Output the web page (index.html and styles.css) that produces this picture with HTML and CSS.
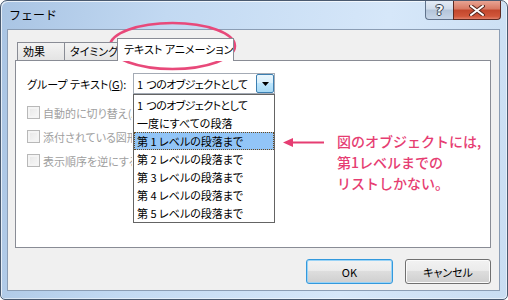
FILE: index.html
```html
<!DOCTYPE html>
<html lang="ja">
<head>
<meta charset="utf-8">
<title>フェード</title>
<link rel="stylesheet" href="styles.css">
</head>
<body>
<div class="window">
  <div class="titlebar">
    <span class="title">フェード</span>
    <div class="caption">
      <div class="cap help">?</div>
      <div class="cap close">
        <svg width="16" height="11" viewBox="0 0 16 11"><path d="M2 1 L14 10 M14 1 L2 10" stroke="#5a2a20" stroke-width="4" stroke-linecap="round"/><path d="M2 1 L14 10 M14 1 L2 10" stroke="#ffffff" stroke-width="2" stroke-linecap="round"/></svg>
      </div>
    </div>
  </div>
  <div class="client">
    <div class="tabs">
      <div class="tab">効果</div>
      <div class="tab tab-timing">タイミング</div>
      <div class="tab active">テキスト アニメーション</div>
    </div>
    <div class="panel">
      <div class="row">
        <span class="label">グループ テキスト(<u>G</u>):</span>
        <div class="combo">
          <span class="combo-value kana">1 つのオブジェクトとして</span>
          <span class="combo-btn"><svg width="7" height="4" viewBox="0 0 7 4"><path d="M0 0 H7 L3.5 4 Z" fill="#000"/></svg></span>
          <ul class="droplist">
            <li class="kana">1 つのオブジェクトとして</li>
            <li>一度にすべての段落</li>
            <li class="sel">第 1 レベルの段落まで</li>
            <li>第 2 レベルの段落まで</li>
            <li>第 3 レベルの段落まで</li>
            <li>第 4 レベルの段落まで</li>
            <li>第 5 レベルの段落まで</li>
          </ul>
        </div>
      </div>
      <div class="checks">
        <div class="check"><span class="box"></span><span class="check-label">自動的に切り替え(A)</span></div>
        <div class="check"><span class="box"></span><span class="check-label">添付されている図形を</span></div>
        <div class="check"><span class="box"></span><span class="check-label">表示順序を逆にする(R)</span></div>
      </div>
      <div class="note">
        <svg class="arrow" width="41" height="11" viewBox="0 0 41 11"><path d="M6 5.5 H41" stroke="#e63d72" stroke-width="2"/><path d="M0 5.5 L10 1 L10 10 Z" fill="#e63d72"/></svg>
        <div class="note-text">
          <div>図のオブジェクトには,</div>
          <div>第1レベルまでの</div>
          <div>リストしかない。</div>
        </div>
      </div>
    </div>
    <div class="footer">
      <button class="btn default">OK</button>
      <button class="btn">キャンセル</button>
    </div>
  </div>
  <svg class="ring" width="508" height="300" viewBox="0 0 508 300"><ellipse cx="172.5" cy="46" rx="62.5" ry="23" fill="none" stroke="#e8497a" stroke-width="2.5"/></svg>
</div>
</body>
</html>
```

FILE: styles.css
```css
html, body {
  margin: 0;
  padding: 0;
}
body {
  width: 508px;
  height: 300px;
  overflow: hidden;
  background: #ffffff;
  font-family: "Noto Sans CJK JP", "Noto Sans", sans-serif;
  font-size: 12px;
  color: #000;
}
.window {
  position: relative;
  box-sizing: border-box;
  width: 508px;
  height: 300px;
  border: 1px solid #4a5a70;
  border-radius: 7px 7px 5px 5px;
  background: linear-gradient(100deg, #a9c4e3 0%, #c2d9f2 30%, #d6e7f9 70%, #c9ddf2 100%);
  box-shadow: inset 1px 1px 0 rgba(255,255,255,0.7), inset -1px -1px 0 rgba(255,255,255,0.5);
  display: flex;
  flex-direction: column;
  padding: 0 7px 8px 6px;
}
.titlebar {
  height: 28px;
  display: flex;
  align-items: flex-start;
}
.title {
  padding-left: 2px;
  line-height: 28px;
  font-size: 12px;
}
.caption {
  margin-left: auto;
  margin-right: -1px;
  display: flex;
  height: 19px;
}
.cap {
  box-sizing: border-box;
  height: 19px;
  display: flex;
  align-items: center;
  justify-content: center;
}
.help {
  width: 28px;
  border: 1px solid #61738c;
  border-top: none;
  border-right: none;
  border-radius: 0 0 0 4px;
  background: linear-gradient(#e3ebf5 0%, #cfdbea 45%, #b3c4d9 50%, #c7d6e8 100%);
  color: #f4f6f8;
  font-family: "DejaVu Sans", sans-serif;
  font-weight: bold;
  font-size: 14px;
  text-shadow: 0 0 1px #2a3440, 1px 0 0 #3a4656, -1px 0 0 #3a4656, 0 1px 0 #3a4656, 0 -1px 0 #3a4656;
}
.close {
  width: 48px;
  border: 1px solid #5e2a22;
  border-top: none;
  border-radius: 0 0 4px 0;
  background: linear-gradient(#e8a493 0%, #d87862 45%, #c2462c 50%, #d0563a 85%, #e0806a 100%);
}
.client {
  flex: 1;
  display: flex;
  flex-direction: column;
  border: 1px solid #8b9db4;
  background: #f0f0f0;
  font-size: 11px;
  font-feature-settings: "palt";
}
.tabs {
  position: relative;
  z-index: 1;
  margin: 8px 0 0 9px;
  height: 22px;
  display: flex;
  align-items: flex-end;
}
.tab {
  box-sizing: border-box;
  height: 18px;
  padding: 0 0 0 5px;
  border: 1px solid #898c95;
  border-bottom: none;
  background: linear-gradient(#f3f3f3, #e4e4e4);
  line-height: 17px;
  white-space: nowrap;
  overflow: hidden;
}
.tab:first-child {
  width: 48px;
}
.tab-timing {
  width: 54px;
  border-left: none;
  padding-left: 5px;
}
.tab.active {
  width: 117px;
  height: 23px;
  margin-left: -2px;
  margin-bottom: -1px;
  padding-left: 6px;
  background: #ffffff;
  line-height: 21px;
}
.panel {
  position: relative;
  box-sizing: border-box;
  height: 188px;
  margin: 0 8px 0 7px;
  padding: 12px 0 0 11px;
  border: 1px solid #898c95;
  background: #ffffff;
}
.row {
  display: flex;
  align-items: center;
  height: 21px;
}
.label {
  width: 106px;
  flex: none;
  white-space: nowrap;
}
.combo {
  position: relative;
  z-index: 2;
  box-sizing: border-box;
  width: 142px;
  height: 21px;
  border: 1px solid #a4abb5;
  display: flex;
  align-items: center;
  background: #fff;
}
.combo-value {
  flex: 1;
  padding-left: 3px;
  white-space: nowrap;
  overflow: hidden;
}
.kana {
  letter-spacing: -0.6px;
  word-spacing: 2px;
}
.combo-btn {
  box-sizing: border-box;
  width: 18px;
  height: 19px;
  border: 1px solid #3c7fb1;
  border-radius: 2px;
  background: linear-gradient(#eaf6fd 0%, #d9f0fc 45%, #bee6fd 50%, #a7d9f5 100%);
  display: flex;
  align-items: center;
  justify-content: center;
}
.droplist {
  position: absolute;
  left: -1px;
  top: 20px;
  box-sizing: border-box;
  width: 142px;
  margin: 0;
  padding: 1px 0 0 0;
  list-style: none;
  border: 1px solid #646464;
  background: #ffffff;
}
.droplist li {
  box-sizing: border-box;
  height: 18px;
  line-height: 18px;
  padding-left: 3px;
  white-space: nowrap;
}
.droplist li.sel {
  background: #92c5f7;
  outline: 1px dotted #6a4a20;
  outline-offset: -1px;
}
.checks {
  margin-top: 12px;
  display: flex;
  flex-direction: column;
  gap: 11px;
}
.check {
  display: flex;
  align-items: center;
  height: 13px;
  color: #a0a0a0;
  white-space: nowrap;
}
.check-label {
  max-width: 89px;
  overflow: hidden;
}
.box {
  box-sizing: border-box;
  width: 13px;
  height: 13px;
  margin-right: 3px;
  border: 1px solid #b8b8b8;
  background: linear-gradient(135deg, #e6e6e6, #f8f8f8);
  box-shadow: inset 0 0 0 2px #f4f4f4;
}
.note {
  position: absolute;
  left: 267px;
  top: 70px;
  display: flex;
  align-items: flex-start;
  gap: 13px;
}
.arrow {
  margin-top: 6px;
}
.note-text {
  color: #e63d72;
  font-size: 14px;
  line-height: 21px;
  font-weight: 500;
  font-feature-settings: normal;
  white-space: nowrap;
}
.footer {
  display: flex;
  justify-content: flex-end;
  gap: 12px;
  padding: 11px 8px 0 0;
}
.btn {
  box-sizing: border-box;
  width: 86px;
  height: 25px;
  margin: 0;
  padding: 0;
  border: 1px solid #707070;
  border-radius: 3px;
  background: linear-gradient(#f2f2f2 0%, #ebebeb 45%, #dddddd 50%, #cfcfcf 100%);
  box-shadow: inset 0 0 0 1px #fbfbfb;
  font-family: "Noto Sans CJK JP", "Noto Sans", sans-serif;
  font-size: 11px;
  color: #000;
  font-feature-settings: "palt";
}
.btn.default {
  width: 87px;
  border-color: #3399dd;
  box-shadow: inset 0 0 0 1px #9ad3f6;
}
.ring {
  position: absolute;
  left: -1px;
  top: -1px;
  pointer-events: none;
}
```
